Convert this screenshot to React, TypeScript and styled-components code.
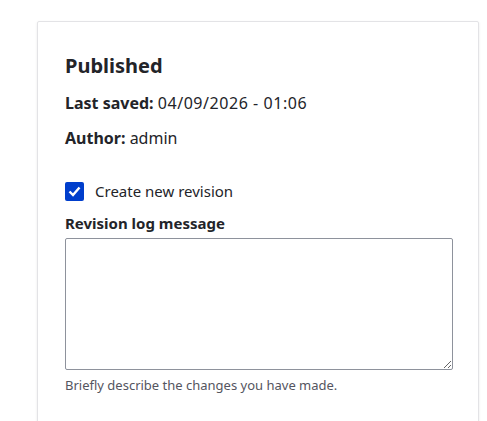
import React from "react";
import styled, { createGlobalStyle } from "styled-components";

const Global = createGlobalStyle`
  html, body { margin: 0; padding: 0; background: #fff; }
  body { font-family: "Noto Sans", "Open Sans", sans-serif; color: #232429; }
`;

const Page = styled.div`
  padding: 21px 8px 0 37px;
  height: 421px;
  box-sizing: border-box;
  overflow: hidden;
`;

const Card = styled.section`
  width: 442px;
  box-sizing: border-box;
  border: 1px solid #e3e3e6;
  border-radius: 2px;
  box-shadow: 0 1px 3px rgba(0, 0, 0, 0.08);
  padding: 30px 26px 40px 27px;
  min-height: 420px;
`;

const Title = styled.h2`
  margin: 0 0 11px;
  font-size: 20px;
  line-height: 28px;
  font-weight: 700;
`;

const Meta = styled.div`
  font-size: 16px;
  line-height: 24px;
  margin-bottom: 11px;
  & strong { font-weight: 700; }
`;

const Value = styled.span`
  letter-spacing: 0.55px;
`;

const CheckRow = styled.label`
  display: flex;
  align-items: center;
  gap: 11px;
  margin-top: 31px;
  font-size: 15px;
  line-height: 20px;
`;

const Box = styled.span`
  width: 19px;
  height: 19px;
  border-radius: 2px;
  background: #003ecc;
  display: inline-flex;
  align-items: center;
  justify-content: center;
`;

const FieldLabel = styled.div`
  margin-top: 12px;
  font-size: 15px;
  font-weight: 700;
  line-height: 20px;
`;

const Area = styled.textarea`
  display: block;
  margin-top: 5px;
  width: 388px;
  height: 132px;
  box-sizing: border-box;
  border: 1px solid #8e929c;
  border-radius: 2px;
  font-family: inherit;
`;

const Help = styled.div`
  margin-top: 6px;
  font-size: 13px;
  line-height: 18px;
  color: #545560;
`;

export default function App() {
  return (
    <>
      <Global />
      <Page>
        <Card>
          <Title>Published</Title>
          <Meta><strong>Last saved:</strong> <Value>04/09/2026 - 01:06</Value></Meta>
          <Meta><strong>Author:</strong> admin</Meta>
          <CheckRow>
            <Box>
              <svg width="13" height="11" viewBox="0 0 13 11">
                <path d="M1.5 5.5 L5 9 L11.5 1.5" stroke="#fff" strokeWidth="2.4" fill="none" />
              </svg>
            </Box>
            Create new revision
          </CheckRow>
          <FieldLabel>Revision log message</FieldLabel>
          <Area />
          <Help>Briefly describe the changes you have made.</Help>
        </Card>
      </Page>
    </>
  );
}
